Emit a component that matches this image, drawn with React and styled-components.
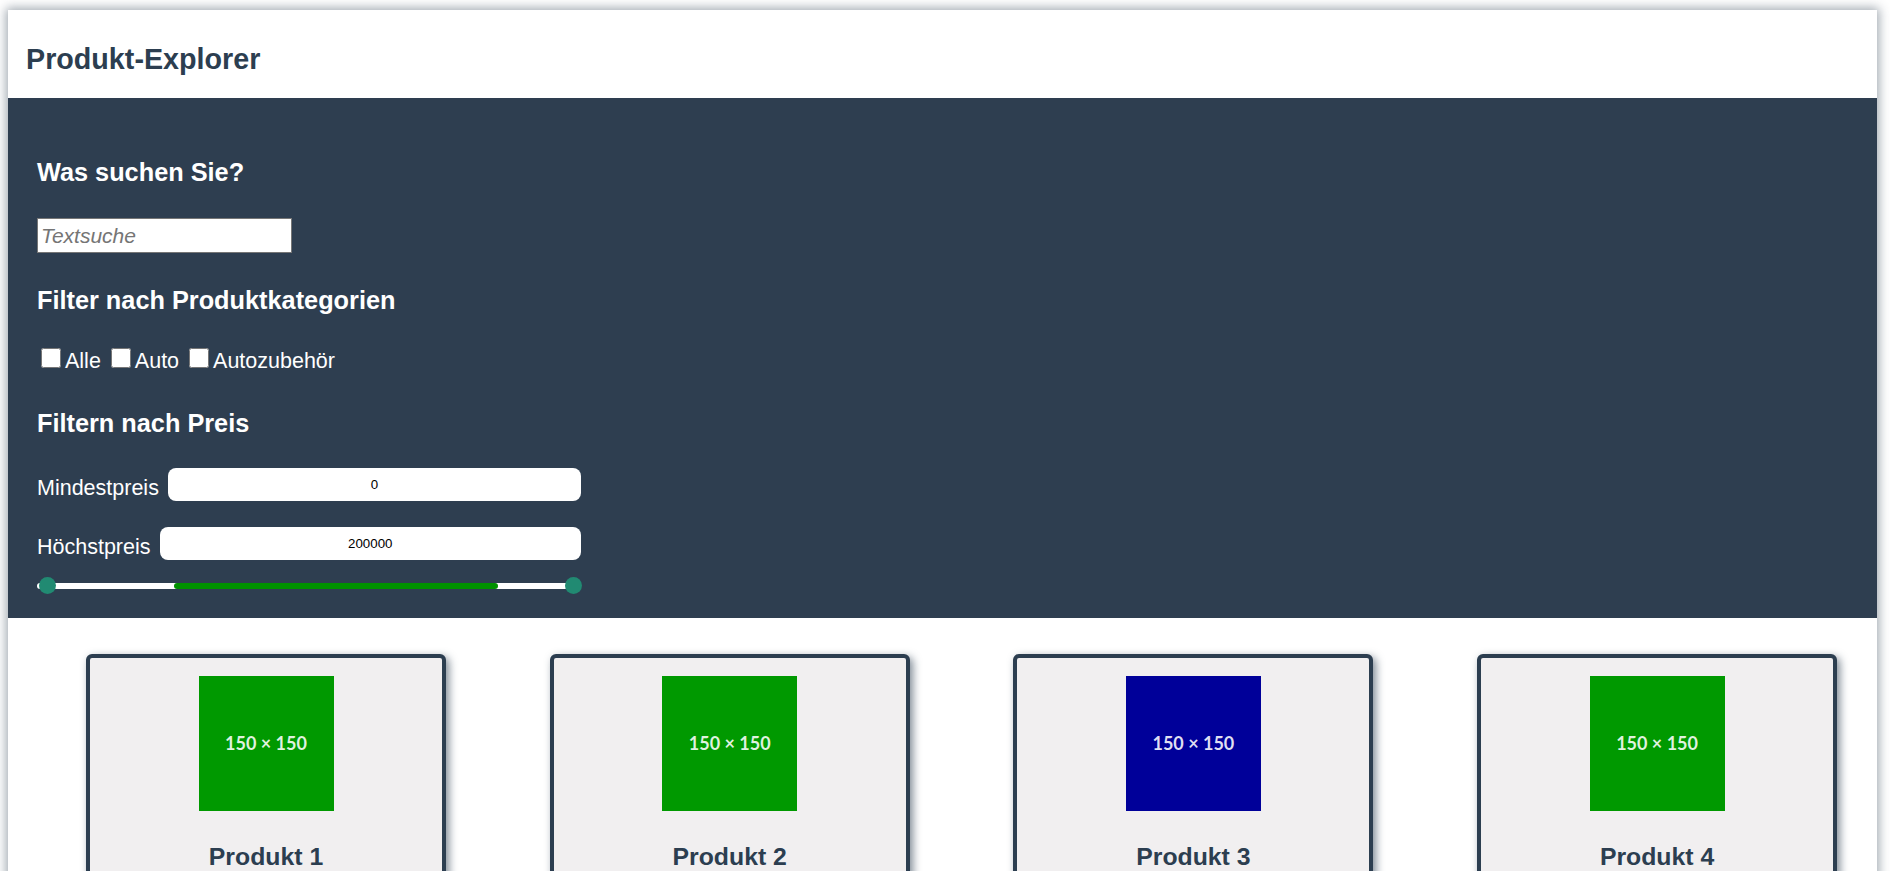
import React, { useState } from 'react';
import styled, { createGlobalStyle } from 'styled-components';

const GlobalStyle = createGlobalStyle`
  html, body {
    margin: 0;
    padding: 0;
    overflow: hidden;
    background: #fff;
  }
  body {
    font-family: "Liberation Sans", Arial, sans-serif;
  }
`;

const Page = styled.div`
  margin: 10px 13px 0 8px;
  background: #fff;
  box-shadow: 0 0 10px 2px rgba(44, 62, 80, 0.45);
  min-height: 900px;
`;

const Header = styled.header`
  background: #fff;
  height: 88px;
  box-sizing: border-box;
  padding: 33px 0 0 18px;
`;

const Title = styled.h1`
  margin: 0;
  font-size: 28.7px;
  line-height: 32px;
  font-weight: 700;
  color: #2c3e50;
`;

const FilterPanel = styled.section`
  background: #2e3e50;
  color: #fff;
  padding: 60px 29px 29px;
`;

const Heading = styled.h2`
  margin: ${({ $top }) => $top || 0}px 0 0;
  font-size: 25.3px;
  line-height: 29px;
  font-weight: 700;
`;

const SearchInput = styled.input`
  display: block;
  margin-top: 31px;
  width: 255px;
  height: 35px;
  box-sizing: border-box;
  border: 1px solid #767676;
  padding: 0 3px;
  font-family: "Liberation Sans", Arial, sans-serif;
  font-size: 21px;
  background: #fff;
  outline: none;

  &::placeholder {
    font-style: italic;
    color: #757575;
  }
`;

const CheckRow = styled.div`
  margin-top: 29.5px;
  font-size: 21.5px;
  line-height: 24.7px;
  white-space: nowrap;
`;

const CheckLabel = styled.label`
  input {
    width: 20px;
    height: 20px;
    margin: 3px 4px 3px 4px;
    vertical-align: baseline;
  }
`;

const PriceForm = styled.div`
  width: 544px;
`;

const PriceRow = styled.div`
  display: flex;
  align-items: center;
  gap: 9px;
  margin-top: ${({ $top }) => $top}px;
`;

const PriceLabel = styled.label`
  font-size: 21.5px;
  line-height: 25px;
  padding-top: 8px;
`;

const PriceInput = styled.input`
  flex: 1;
  height: 33px;
  box-sizing: border-box;
  border: none;
  border-radius: 8px;
  background: #fff;
  text-align: center;
  font-family: "Liberation Sans", Arial, sans-serif;
  font-size: 13.3px;
  color: #000;
  outline: none;
`;

const Slider = styled.div`
  position: relative;
  margin-top: 23px;
  height: 6px;
  border-radius: 3px;
  background: #fff;
`;

const SliderRange = styled.div`
  position: absolute;
  top: 0;
  height: 6px;
  border-radius: 3px;
  background: #009100;
`;

const SliderThumb = styled.div`
  position: absolute;
  top: -5.5px;
  width: 17px;
  height: 17px;
  border-radius: 50%;
  background: #218a72;
`;

const Products = styled.section`
  display: grid;
  grid-template-columns: repeat(4, 360px);
  column-gap: 103.7px;
  padding: 36px 0 0 78px;
`;

const Card = styled.article`
  box-sizing: border-box;
  min-height: 320px;
  border: 4px solid #2c3e50;
  border-radius: 6px;
  background: #f1eff0;
  box-shadow: 3px 3px 8px rgba(44, 62, 80, 0.6);
  padding-top: 18px;
  display: flex;
  flex-direction: column;
  align-items: center;
`;

const Placeholder = styled.div`
  width: 135px;
  height: 135px;
  background: ${({ $color }) => $color};
  color: rgba(255, 255, 255, 0.88);
  display: flex;
  align-items: center;
  justify-content: center;
  font-family: Lato, "Open Sans", sans-serif;
  font-weight: 700;
  font-size: 18px;
`;

const CardTitle = styled.h3`
  margin: 32px 0 0;
  font-size: 24.8px;
  line-height: 28px;
  font-weight: 700;
  color: #2c3e50;
`;

const categories = ['Alle', 'Auto', 'Autozubehör'];

const products = [
  { name: 'Produkt 1', color: '#009900' },
  { name: 'Produkt 2', color: '#009900' },
  { name: 'Produkt 3', color: '#000099' },
  { name: 'Produkt 4', color: '#009900' },
];

const App = () => {
  const [query, setQuery] = useState('');
  const [minPrice, setMinPrice] = useState('0');
  const [maxPrice, setMaxPrice] = useState('200000');

  return (
    <>
      <GlobalStyle />
      <Page>
        <Header>
          <Title>Produkt-Explorer</Title>
        </Header>

        <FilterPanel>
          <Heading>Was suchen Sie?</Heading>
          <SearchInput
            type="text"
            placeholder="Textsuche"
            value={query}
            onChange={(e) => setQuery(e.target.value)}
          />

          <Heading $top={33}>Filter nach Produktkategorien</Heading>
          <CheckRow>
            {categories.map((c, i) => (
              <React.Fragment key={c}>
                {i > 0 && ' '}
                <CheckLabel>
                  <input type="checkbox" />
                  {c}
                </CheckLabel>
              </React.Fragment>
            ))}
          </CheckRow>

          <Heading $top={35.5}>Filtern nach Preis</Heading>
          <PriceForm>
            <PriceRow $top={30}>
              <PriceLabel>Mindestpreis</PriceLabel>
              <PriceInput
                type="text"
                value={minPrice}
                onChange={(e) => setMinPrice(e.target.value)}
              />
            </PriceRow>
            <PriceRow $top={26}>
              <PriceLabel>Höchstpreis</PriceLabel>
              <PriceInput
                type="text"
                value={maxPrice}
                onChange={(e) => setMaxPrice(e.target.value)}
              />
            </PriceRow>
            <Slider>
              <SliderRange style={{ left: 137, width: 324 }} />
              <SliderThumb style={{ left: 2 }} />
              <SliderThumb style={{ left: 528 }} />
            </Slider>
          </PriceForm>
        </FilterPanel>

        <Products>
          {products.map((p) => (
            <Card key={p.name}>
              <Placeholder $color={p.color}>150 × 150</Placeholder>
              <CardTitle>{p.name}</CardTitle>
            </Card>
          ))}
        </Products>
      </Page>
    </>
  );
};

export default App;
